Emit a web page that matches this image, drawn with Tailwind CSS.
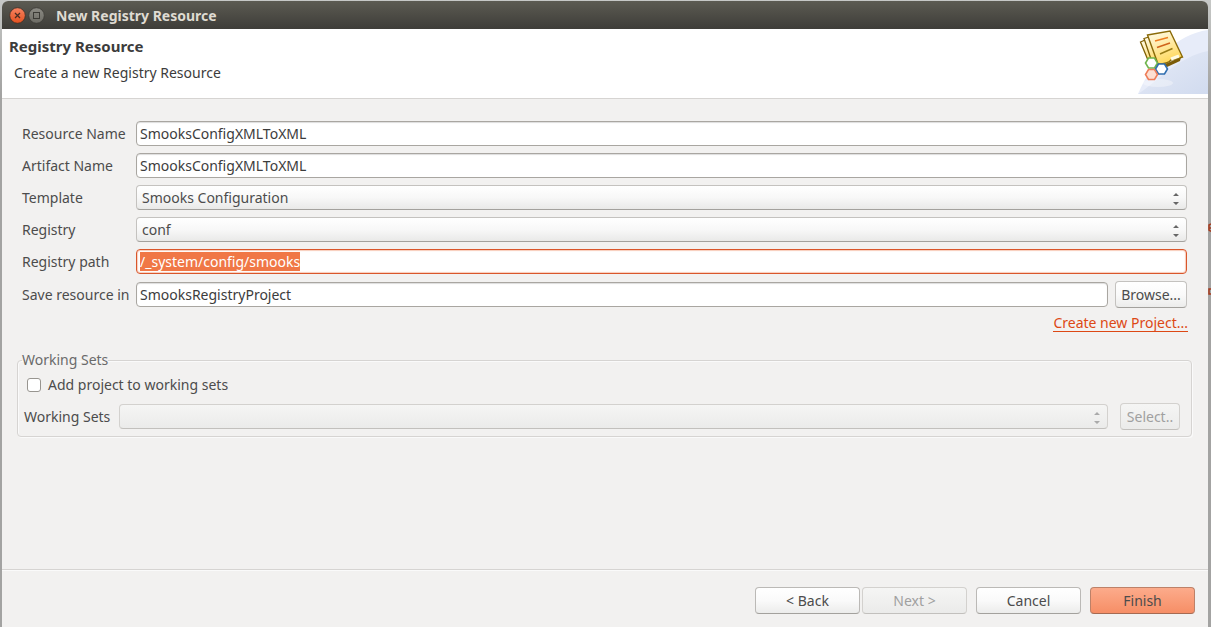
<!DOCTYPE html>
<html lang="en">
<head>
  <meta charset="UTF-8" />
  <meta name="viewport" content="width=device-width, initial-scale=1.0" />
  <title>New Registry Resource</title>
  <script src="https://cdn.jsdelivr.net/npm/@tailwindcss/browser@4"></script>
</head>
<body class="relative min-h-screen flex flex-col bg-linear-to-b from-[#c6c8c6] via-[#a3a3a2] via-15% to-[#a3a3a2] pt-px pl-[2px] pr-[3px] overflow-hidden font-['Noto_Sans',sans-serif] text-sm text-[#4c4c4c]">
  <!-- window behind the dialog -->
  <svg aria-hidden="true" viewBox="0 0 3 75" class="absolute right-0 top-[222px] w-[3px] h-[75px]" fill="none" stroke="#a63a1c" stroke-width="1.5">
    <path d="M3 2L1 3V8L3 9.500M1 6H3" />
    <path d="M3 67H1V72H3" />
  </svg>

  <div class="flex-1 flex flex-col bg-[#f2f1f0] rounded-t-md">
    <header class="h-7 shrink-0 flex items-center rounded-t-md bg-linear-to-b from-[#5c5b52] to-[#3e3d39] pl-[7px]">
      <button type="button" aria-label="Close" class="size-[17px] mr-[2px]">
        <svg viewBox="0 0 17 17" class="size-[17px]">
          <defs>
            <linearGradient id="close" x1="0" y1="0" x2="0" y2="1"><stop offset="0" stop-color="#f78361" /><stop offset="1" stop-color="#e4511f" /></linearGradient>
            <linearGradient id="max" x1="0" y1="0" x2="0" y2="1"><stop offset="0" stop-color="#8c8b84" /><stop offset="1" stop-color="#6c6b64" /></linearGradient>
          </defs>
          <circle cx="8.500" cy="8.500" r="7.800" fill="url(#close)" stroke="#3d2e26" stroke-width=".8" />
          <path d="M6 6l5 5M11 6l-5 5" stroke="#4a2d22" stroke-width="1.3" />
        </svg>
      </button>
      <button type="button" aria-label="Maximize" class="size-[17px]">
        <svg viewBox="0 0 17 17" class="size-[17px]">
          <circle cx="8.500" cy="8.500" r="7.800" fill="url(#max)" stroke="#3b3a35" stroke-width=".8" />
          <rect x="5.500" y="5.500" width="6" height="6" fill="none" stroke="#3b3a35" />
        </svg>
      </button>
      <h1 class="ml-[11px] pt-px text-sm font-bold text-[#dfdbd2]">New Registry Resource</h1>
    </header>

    <section class="flex justify-between h-[70px] bg-white border-b border-[#d6d4d2]">
      <div class="pt-[7px] pl-[7px] text-[#3c3c3c]">
        <h2 class="text-[15px] leading-5 font-bold">Registry Resource</h2>
        <p class="mt-[7px] pl-[5px] leading-5">Create a new Registry Resource</p>
      </div>
      <svg viewBox="0 0 75 66" class="w-[75px] h-[66px]">
        <defs>
          <linearGradient id="swoosh" x1="0" y1="0" x2="1" y2="1"><stop offset="0" stop-color="#e6ebf7" /><stop offset="1" stop-color="#d1dbef" /></linearGradient>
          <linearGradient id="page" x1="0" y1="0" x2="0.4" y2="1"><stop offset="0" stop-color="#fffdf0" /><stop offset="1" stop-color="#ffd95f" /></linearGradient>
        </defs>
        <path d="M5 65C18 34 43 5 75 1V65Z" fill="#e7ecf9" />
        <path d="M5 65C25 52 45 28 75 22V65Z" fill="url(#swoosh)" />
        <ellipse cx="25" cy="54" rx="15" ry="4" fill="#fff" opacity=".35" />
        <path d="M30 36L48 28L47 32L34 38Z" fill="#7b5c08" />
        <path d="M7.500 13L12 11L23 38L17 36Z" fill="url(#page)" stroke="#806005" stroke-width="1.3" />
        <path d="M11 9.500L16 8L28 36L20 36Z" fill="url(#page)" stroke="#806005" stroke-width="1.3" />
        <path d="M14.500 6L37 2L49.500 28Q44 30 38 31Q35 35 25 35Z" fill="url(#page)" stroke="#8a6a08" stroke-width="1.4" />
        <path d="M38 30L46 27" stroke="#fffbe3" stroke-width="3" />
        <path d="M22 12L35 8.500" stroke="#ee7d20" stroke-width="1.5" />
        <path d="M24 18.500L37 14" stroke="#cf631b" stroke-width="1.5" />
        <path d="M27 25L39.500 19.500" stroke="#9a7c16" stroke-width="1.5" />
        <path d="M15.500 29h6l3 5-3 5h-6l-3-5z" fill="#fff" stroke="#6fb54e" stroke-width="1.600" />
        <path d="M25.500 35h6l3 5-3 5h-6l-3-5z" fill="#fff" stroke="#2f6eb0" stroke-width="1.600" />
        <path d="M15.500 40.500h6l3 5-3 5h-6l-3-5z" fill="#fddfd2" stroke="#ee7d58" stroke-width="1.600" />
      </svg>
    </section>

    <form class="flex-1 flex flex-col">
      <div class="pt-[22px] pl-5 pr-[21px] grid grid-cols-[108px_1fr] gap-x-[6px] gap-y-[7px] items-center">
        <label for="resource-name" class="whitespace-nowrap">Resource Name</label>
        <input id="resource-name" type="text" value="SmooksConfigXMLToXML" class="w-full h-[25px] px-[3px] rounded border border-[#a9a6a1] bg-white text-[#3c3c3c] shadow-[inset_0_1px_1px_#ddd]" />

        <label for="artifact-name" class="whitespace-nowrap">Artifact Name</label>
        <input id="artifact-name" type="text" value="SmooksConfigXMLToXML" class="w-full h-[25px] px-[3px] rounded border border-[#a9a6a1] bg-white text-[#3c3c3c] shadow-[inset_0_1px_1px_#ddd]" />

        <label for="template">Template</label>
        <div class="relative">
          <select id="template" class="block appearance-none w-full h-[25px] px-[5px] rounded border border-[#c4c2bf] border-b-[#a3a19d] bg-linear-to-b from-white via-[#f8f8f8] to-[#e9e9e8]">
            <option>Smooks Configuration</option>
          </select>
          <svg viewBox="0 0 6 13" class="absolute right-2 top-[7px] w-[6px] h-[13px] pointer-events-none" fill="#666"><path d="M0 4L3 1L6 4zM0 10H6L3 13z" /></svg>
        </div>

        <label for="registry">Registry</label>
        <div class="relative">
          <select id="registry" class="block appearance-none w-full h-[25px] px-[5px] rounded border border-[#c4c2bf] border-b-[#a3a19d] bg-linear-to-b from-white via-[#f8f8f8] to-[#e9e9e8]">
            <option>conf</option>
          </select>
          <svg viewBox="0 0 6 13" class="absolute right-2 top-[7px] w-[6px] h-[13px] pointer-events-none" fill="#666"><path d="M0 4L3 1L6 4zM0 10H6L3 13z" /></svg>
        </div>

        <label for="registry-path" class="whitespace-nowrap">Registry path</label>
        <input id="registry-path" type="text" value="/_system/config/smooks" autofocus class="w-full h-[25px] px-[3px] rounded border border-[#d9562b] bg-white text-[#3c3c3c] shadow-[inset_0_0_1px_1px_#f8cdbb] outline-none selection:bg-[#f07746] selection:text-white" />

        <label for="save-in" class="whitespace-nowrap">Save resource in</label>
        <div class="flex items-center gap-[7px]">
          <input id="save-in" type="text" value="SmooksRegistryProject" class="flex-1 min-w-0 h-[25px] px-[3px] rounded border border-[#a9a6a1] bg-white text-[#3c3c3c] shadow-[inset_0_1px_1px_#ddd]" />
          <button type="button" class="w-[72px] h-[27px] rounded border border-[#c4c2bf] border-b-[#a3a19d] bg-linear-to-b from-white via-[#fafafa] to-[#ececeb]">Browse...</button>
        </div>
      </div>

      <div class="pt-[5px] pr-5 text-right leading-5">
        <a href="#" class="inline-block leading-[17px] border-b border-[#dd4814] text-[#dd4814]">Create new Project...</a>
      </div>

      <fieldset class="mt-[17px] ml-[15px] mr-4 h-[87px] rounded border border-[#d6d4d2] shadow-[inset_1px_1px_0_#fafafa,1px_1px_0_#fafafa]">
        <legend class="ml-1 leading-5 text-[#6a6a6a]">Working Sets</legend>
        <div class="flex items-center gap-[7px] pt-px pl-[9px] h-[29px]">
          <input id="add-project" type="checkbox" class="appearance-none size-[14px] rounded-[3px] border border-[#989590] bg-white checked:bg-[#f07746]" />
          <label for="add-project">Add project to working sets</label>
        </div>
        <div class="flex items-center h-[35px] pl-[6px] pr-[11px]">
          <label for="working-sets" class="w-[95px] whitespace-nowrap">Working Sets</label>
          <div class="relative flex-1 mr-3">
            <select id="working-sets" disabled class="block appearance-none w-full h-[25px] rounded border border-[#d3d1ce] border-b-[#c2c0bd] bg-linear-to-b from-[#f5f5f4] to-[#ebebea]"></select>
            <svg viewBox="0 0 6 13" class="absolute right-2 top-[7px] w-[6px] h-[13px] pointer-events-none" fill="#aaa"><path d="M0 4L3 1L6 4zM0 10H6L3 13z" /></svg>
          </div>
          <button type="button" disabled class="w-[60px] h-[27px] rounded border border-[#d3d1ce] border-b-[#c2c0bd] bg-linear-to-b from-[#f5f5f4] to-[#ebebea] text-[#a0a0a0]">Select..</button>
        </div>
      </fieldset>

      <footer class="mt-auto h-[58px] flex justify-end pt-[17px] pr-[13px] border-t border-[#d6d4d2] shadow-[inset_0_1px_0_#fafafa]">
        <button type="button" class="w-[105px] h-[27px] mr-[2px] rounded border border-[#bbb9b6] border-b-[#a3a19d] bg-linear-to-b from-white via-[#fafafa] to-[#ececeb]">&lt; Back</button>
        <button type="button" disabled class="w-[105px] h-[27px] mr-[9px] rounded border border-[#d3d1ce] border-b-[#c2c0bd] bg-linear-to-b from-[#f5f5f4] to-[#ebebea] text-[#a0a0a0]">Next &gt;</button>
        <button type="button" class="w-[105px] h-[27px] mr-[9px] rounded border border-[#bbb9b6] border-b-[#a3a19d] bg-linear-to-b from-white via-[#fafafa] to-[#ececeb]">Cancel</button>
        <button type="submit" class="w-[105px] h-[27px] rounded border border-[#bd8168] border-b-[#a56a52] bg-linear-to-b from-[#fcab8b] to-[#f68e66]">Finish</button>
      </footer>
    </form>
  </div>

  <script>
    const path = document.getElementById("registry-path");
    path.focus();
    path.select();
  </script>
</body>
</html>
